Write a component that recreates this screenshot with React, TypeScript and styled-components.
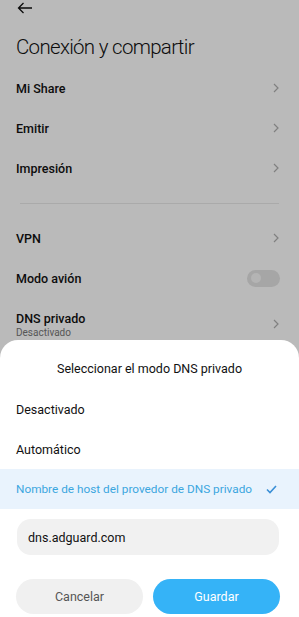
import React from 'react';
import styled, { createGlobalStyle } from 'styled-components';

const GlobalStyle = createGlobalStyle`
  html, body {
    margin: 0;
    padding: 0;
    background: #ffffff;
  }
  body {
    font-family: Roboto, "Noto Sans", sans-serif;
  }
`;

const Screen = styled.div`
  position: relative;
  width: 299px;
  height: 617px;
  overflow: hidden;
  background: #ffffff;
`;

const Page = styled.div`
  display: flex;
  flex-direction: column;
`;

const TopBar = styled.div`
  height: 16px;
  padding-left: 17px;
  display: flex;
  align-items: center;
`;

const Title = styled.h1`
  margin: 17px 0 7px 16px;
  font-size: 20.5px;
  font-weight: 300;
  color: #111;
  line-height: 28px;
  letter-spacing: -0.7px;
`;

const Row = styled.div<{ $tall?: boolean }>`
  height: ${p => (p.$tall ? '52px' : '40px')};
  padding: 0 20px 0 16px;
  box-sizing: border-box;
  display: flex;
  align-items: center;
  justify-content: space-between;
`;

const RowText = styled.div`
  display: flex;
  flex-direction: column;
`;

const RowLabel = styled.span`
  font-size: 12.5px;
  font-weight: 500;
  color: #111;
`;

const RowSub = styled.span`
  font-size: 10px;
  color: #777;
  margin-top: 1px;
`;

const Divider = styled.div`
  height: 1px;
  background: #eaeaea;
  margin: 15px 20px 14px 20px;
`;

const Toggle = styled.div`
  width: 33px;
  height: 17px;
  border-radius: 9px;
  background: #e4e4e4;
  display: flex;
  align-items: center;
  padding-left: 4px;
  box-sizing: border-box;
  margin-right: -1px;
`;

const Knob = styled.div`
  width: 10px;
  height: 10px;
  border-radius: 50%;
  background: #f7f7f7;
`;

const Dim = styled.div`
  position: absolute;
  inset: 0;
  background: rgba(0, 0, 0, 0.27);
`;

const Sheet = styled.div`
  position: absolute;
  left: 0;
  right: 0;
  bottom: 0;
  top: 340px;
  background: #ffffff;
  border-radius: 18px 18px 0 0;
  display: flex;
  flex-direction: column;
`;

const SheetTitle = styled.div`
  text-align: center;
  font-size: 12.5px;
  color: #111;
  margin-top: 21px;
  height: 16px;
  line-height: 16px;
`;

const Options = styled.div`
  display: flex;
  flex-direction: column;
  margin-top: 12px;
`;

const Option = styled.div<{ $selected?: boolean }>`
  height: 40px;
  display: flex;
  align-items: center;
  justify-content: space-between;
  padding: 0 22px 0 16px;
  white-space: nowrap;
  font-size: ${p => (p.$selected ? '11.8px' : '12.5px')};
  color: ${p => (p.$selected ? '#3ba6df' : '#111')};
  background: ${p => (p.$selected ? '#e9f3fd' : 'transparent')};
`;

const Input = styled.div`
  margin: 10px 20px 0 17px;
  height: 36px;
  border-radius: 14px;
  background: #f1f1f1;
  display: flex;
  align-items: center;
  padding-left: 11px;
  font-size: 12.5px;
  color: #111;
`;

const Buttons = styled.div`
  display: grid;
  grid-template-columns: 1fr 1fr;
  gap: 10px;
  margin: 24px 19px 0 16px;
`;

const Button = styled.div<{ $primary?: boolean }>`
  height: 35px;
  border-radius: 18px;
  display: flex;
  align-items: center;
  justify-content: center;
  font-size: 12.5px;
  font-weight: 400;
  color: ${p => (p.$primary ? '#ffffff' : '#555')};
  background: ${p => (p.$primary ? '#35b3f7' : '#f0f0f0')};
`;

const Chevron = () => (
  <svg width="6" height="10" viewBox="0 0 6 10">
    <path d="M1 1l4 4-4 4" fill="none" stroke="#b0b0b0" strokeWidth="1.2" />
  </svg>
);

const BackArrow = () => (
  <svg width="16" height="12" viewBox="0 0 16 12">
    <path d="M15 6H1.5M6.5 1L1.5 6l5 5" fill="none" stroke="#111" strokeWidth="1.3" />
  </svg>
);

const Check = () => (
  <svg width="11" height="9" viewBox="0 0 11 9">
    <path d="M1 4.5l3 3L10 1" fill="none" stroke="#3a8fd6" strokeWidth="1.6" />
  </svg>
);

const App = () => (
  <Screen>
    <GlobalStyle />
    <Page>
      <TopBar>
        <BackArrow />
      </TopBar>
      <Title>Conexión y compartir</Title>
      <Row>
        <RowLabel>Mi Share</RowLabel>
        <Chevron />
      </Row>
      <Row>
        <RowLabel>Emitir</RowLabel>
        <Chevron />
      </Row>
      <Row>
        <RowLabel>Impresión</RowLabel>
        <Chevron />
      </Row>
      <Divider />
      <Row>
        <RowLabel>VPN</RowLabel>
        <Chevron />
      </Row>
      <Row>
        <RowLabel>Modo avión</RowLabel>
        <Toggle>
          <Knob />
        </Toggle>
      </Row>
      <Row $tall>
        <RowText>
          <RowLabel>DNS privado</RowLabel>
          <RowSub>Desactivado</RowSub>
        </RowText>
        <Chevron />
      </Row>
    </Page>
    <Dim />
    <Sheet>
      <SheetTitle>Seleccionar el modo DNS privado</SheetTitle>
      <Options>
        <Option>Desactivado</Option>
        <Option>Automático</Option>
        <Option $selected>
          Nombre de host del provedor de DNS privado
          <Check />
        </Option>
      </Options>
      <Input>dns.adguard.com</Input>
      <Buttons>
        <Button>Cancelar</Button>
        <Button $primary>Guardar</Button>
      </Buttons>
    </Sheet>
  </Screen>
);

export default App;
